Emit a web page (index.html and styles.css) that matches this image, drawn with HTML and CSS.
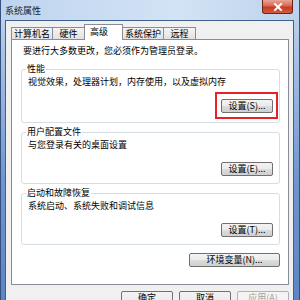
FILE: index.html
```
<!DOCTYPE html>
<html>
  <head>
    <meta charset="UTF-8" />
    <title>系统属性</title>
    <link rel="stylesheet" href="styles.css">
  </head>
  <body>
    <div class="window">
      <div class="titlebar">
        <span class="title">系统属性</span>
        <span class="close">
          <svg width="10" height="8" viewBox="0 0 10 8">
            <path d="M2 1 L8 7 M8 1 L2 7" stroke="#fff" stroke-width="2" stroke-linecap="square" />
          </svg>
        </span>
      </div>

      <div class="frame">
        <div class="client">
          <!-- tabs -->
          <div class="tabs">
            <div class="tab">计算机名</div>
            <div class="tab">硬件</div>
            <div class="tab active">高级</div>
            <div class="tab">系统保护</div>
            <div class="tab">远程</div>
          </div>

          <div class="panel">
            <p class="note">要进行大多数更改，您必须作为管理员登录。</p>

            <fieldset class="group first">
              <legend>性能</legend>
              <p>视觉效果，处理器计划，内存使用，以及虚拟内存</p>
              <div class="row">
                <span class="highlight"><button class="btn">设置(S)...</button></span>
              </div>
            </fieldset>

            <fieldset class="group">
              <legend>用户配置文件</legend>
              <p>与您登录有关的桌面设置</p>
              <div class="row">
                <button class="btn">设置(E)...</button>
              </div>
            </fieldset>

            <fieldset class="group">
              <legend>启动和故障恢复</legend>
              <p>系统启动、系统失败和调试信息</p>
              <div class="row">
                <button class="btn">设置(T)...</button>
              </div>
            </fieldset>

            <div class="row env">
              <button class="btn wide">环境变量(N)...</button>
            </div>
          </div>

          <div class="footer">
            <button class="btn">确定</button>
            <button class="btn">取消</button>
            <button class="btn" disabled>应用(A)</button>
          </div>
        </div>
      </div>
    </div>
  </body>
</html>
```

FILE: styles.css
```
body {
  margin: 0;
  font-family: "Noto Sans CJK SC", "DejaVu Sans", sans-serif;
  font-size: 9px;
  color: #000;
  background: #fff;
}
.window {
  width: 300px;
  height: 300px;
  overflow: hidden;
  display: flex;
  flex-direction: column;
  background: linear-gradient(180deg, #c3d7ee 0%, #9fbbe2 25%, #6f95cf 60%, #5e85c4 100%);
  border-left: 1px solid #34507d;
  border-right: 1px solid #34507d;
  box-sizing: border-box;
}
.titlebar {
  height: 20px;
  flex: none;
  display: flex;
  justify-content: space-between;
  align-items: flex-start;
  padding: 0 6px 0 4px;
  background: linear-gradient(90deg, #bed4ee 0%, #d3e3f5 60%, #bcd2ec 100%);
}
.title {
  font-size: 9px;
  line-height: 21px;
  color: #1e1e1e;
}
.close {
  width: 31px;
  height: 14px;
  display: flex;
  align-items: center;
  justify-content: center;
  border: 1px solid #6a2418;
  border-top: none;
  border-radius: 0 0 3px 3px;
  background: linear-gradient(180deg, #e8a595 0%, #d86852 45%, #c33b22 55%, #d75a3f 100%);
  box-sizing: border-box;
}
.frame {
  flex: 1;
  display: flex;
  padding: 0 5px 0 4px;
}
.client {
  flex: 1;
  background: #f0f0f0;
  border: 1px solid #3f5f8f;
  border-bottom: none;
  display: flex;
  flex-direction: column;
  padding: 4px 4px 0 5px;
}
.tabs {
  display: flex;
  align-items: flex-end;
  height: 14px;
  position: relative;
  z-index: 1;
}
.tab {
  height: 11px;
  min-width: 27px;
  line-height: 12px;
  padding: 0 2px;
  text-align: center;
  border: 1px solid #898c95;
  border-bottom: none;
  margin-right: -1px;
  background: linear-gradient(180deg, #f4f4f4, #e2e2e2);
}
.tab.active {
  height: 15px;
  min-width: 0;
  padding: 0 14px 0 5px;
  margin-bottom: -1px;
  margin-right: -1px;
  background: #fff;
  line-height: 13px;
  text-align: left;
}
.panel {
  background: #fff;
  border: 1px solid #898c95;
  height: 246px;
  flex: none;
  box-sizing: border-box;
  padding: 5px 8px 0 9px;
}
.note {
  margin: 0 0 7px 2px;
  line-height: 12px;
}
.group {
  margin: 0 0 4px 0;
  border: 1px solid #d5dde5;
  border-radius: 3px;
  padding: 0 6px 7px 6px;
  min-width: 0;
}
.group.first {
  padding-bottom: 9px;
}
.group legend {
  padding: 0 1px;
  margin-left: -2px;
  line-height: 10px;
}
.group p {
  margin: 2px 0 0 0;
  line-height: 12px;
}
.row {
  display: flex;
  justify-content: flex-end;
  margin-top: 11px;
}
.btn {
  font-family: "Noto Sans CJK SC", "DejaVu Sans", sans-serif;
  font-size: 9px;
  height: 14px;
  line-height: 10px;
  width: 52px;
  padding: 0;
  border: 1px solid #707070;
  border-radius: 2px;
  background: linear-gradient(180deg, #f3f3f3 0%, #ebebeb 50%, #dddddd 51%, #cfcfcf 100%);
  color: #000;
}
.btn.wide {
  width: 91px;
}
.btn:disabled {
  color: #a0a0a0;
  border-color: #adb2b5;
  background: #f4f4f4;
}
.highlight {
  display: flex;
  border: 2px solid #e8202a;
  padding: 5px 3px 4px 4px;
  margin: -7px -5px -6px 0;
}
.env {
  margin-top: 8px;
}
.footer {
  display: flex;
  justify-content: flex-end;
  gap: 6px;
  padding-top: 6px;
  padding-right: 0;
}
.footer .btn {
  height: 22px;
  padding-bottom: 8px;
  flex: none;
}
```
